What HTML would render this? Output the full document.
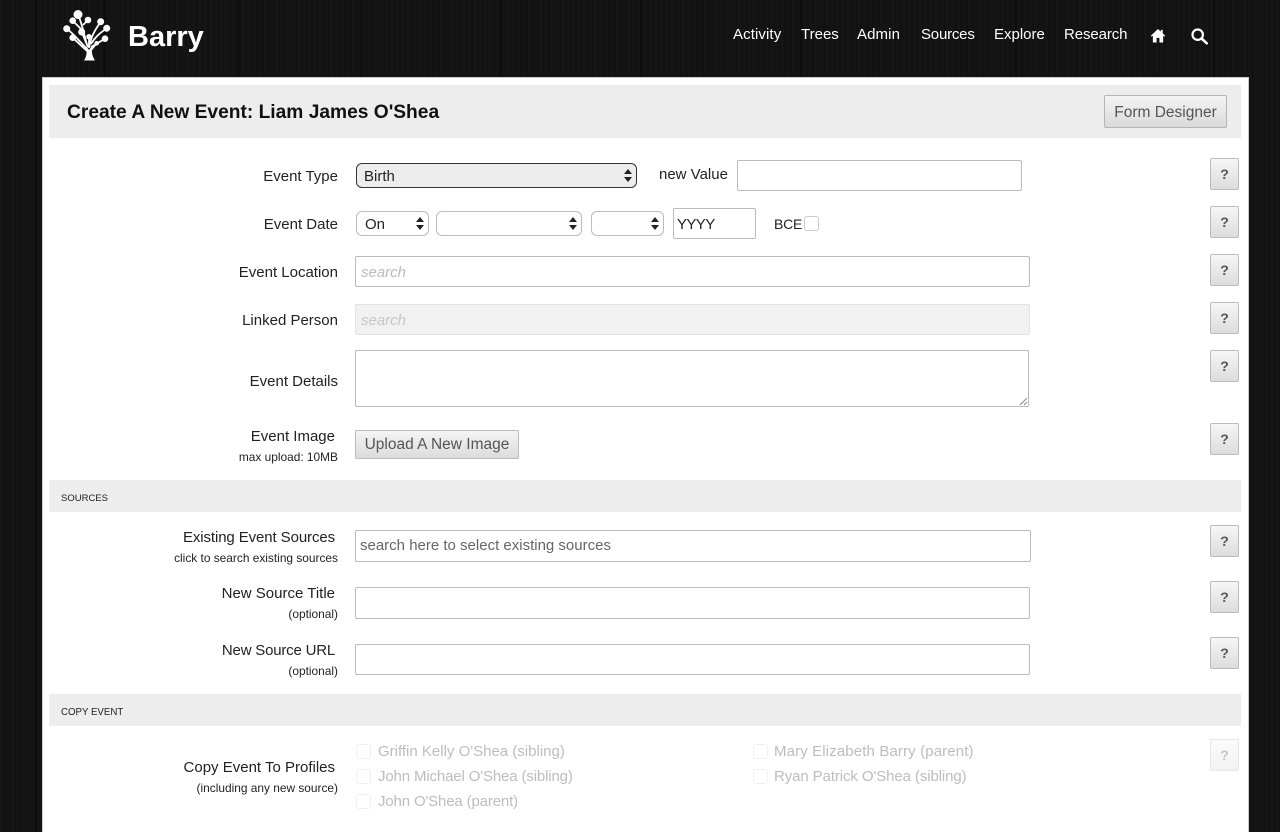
<!DOCTYPE html>
<html lang="en"><head><meta charset="utf-8"><title>Create A New Event</title>
<style>
*{box-sizing:border-box}
html,body{margin:0;padding:0;width:1280px;height:832px;overflow:hidden}
body{position:relative;font-family:"Liberation Sans",sans-serif;color:#222;font-size:15px;
background-color:#131313;
background-image:linear-gradient(90deg,transparent 0 35px,#0d0d0d 35px 37px,transparent 37px 104px,#0c0c0c 104px 106px,transparent 106px 238px,#0e0e0e 238px 240px,transparent 240px 360px,#0e0e0e 360px 362px,transparent 362px 500px,#0e0e0e 500px 502px,transparent 502px 640px,#0e0e0e 640px 642px,transparent 642px 800px,#0e0e0e 800px 802px,transparent 802px 1015px,#0c0c0c 1015px 1017px,transparent 1017px 1213px,#0c0c0c 1213px 1215px,transparent 1215px),repeating-linear-gradient(90deg,#151515 0 3px,#121212 3px 5px,#141414 5px 9px,#111 9px 11px)}
.a{position:absolute}
.t{position:absolute;white-space:nowrap;line-height:20px;margin-top:1px}
.r{text-align:right}
.nav{position:absolute;top:25px;color:#fff;font-size:15px;line-height:20px;white-space:nowrap}
#card{position:absolute;left:42px;top:77px;width:1207px;height:770px;background:#fff;border:1px solid #ccc;border-bottom:0}
.band{position:absolute;background:#ededed;left:49px;width:1192px}
.in{position:absolute;background:#fff;border:1px solid #bbb;border-radius:2px}
.sel{position:absolute;background:#fff;border:1px solid #bbb;border-radius:6px;height:25px}
.sel::after{content:"";position:absolute;right:4px;top:5px;width:0;height:0;border-left:4px solid transparent;border-right:4px solid transparent;border-bottom:5px solid #222}
.sel::before{content:"";position:absolute;right:4px;top:13px;width:0;height:0;border-left:4px solid transparent;border-right:4px solid transparent;border-top:5px solid #222}
.help{position:absolute;left:1210px;width:29px;height:32px;border:1px solid #bbb;border-radius:2px;background:linear-gradient(#f6f6f6,#dcdcdc);color:#555;font-weight:bold;font-size:14px;line-height:31px;text-align:center}
.cb{position:absolute;width:15px;height:15px;border:1px solid #f0f0f0;border-radius:3px;background:#fff}
.g{color:#bdbdbd}
.s{font-size:11.900px;line-height:14px;color:#222;margin-top:0}
</style></head><body>

<svg class="a" style="left:62px;top:10px" width="50" height="52" viewBox="0 0 50 52" fill="#fff">
<g fill="none" stroke="#fff" stroke-width="1.800">
<path d="M27 38C29 26 33 20 38.700 11.700"/><path d="M29 34C33 27 38 23 44.700 18.300"/><path d="M29 37L43 28.700"/><path d="M29 40L34.700 33.300"/>
<path d="M25 35C22 24 20 14 16 4"/><path d="M19 19L10.700 10.700"/><path d="M21 15L26 10"/><path d="M26 40C18 32 12 24 4.700 18.700"/><path d="M25 41L10.700 27.700"/><path d="M26 37L19.700 22"/><path d="M27 37L27 26.700"/>
</g>
<path d="M24 36C25 42 25 46 22 50.500H33C30 46 29.500 42 30 36L27 40Z"/>
<circle cx="16" cy="4.500" r="4.500"/><circle cx="10.700" cy="10.700" r="3.300"/><circle cx="26" cy="10" r="3.300"/><circle cx="38.700" cy="11.700" r="3.500"/><circle cx="4.700" cy="18.700" r="3.500"/><circle cx="44.700" cy="18.300" r="3.500"/><circle cx="19.700" cy="22" r="3.500"/><circle cx="10.700" cy="27.700" r="3.300"/><circle cx="27" cy="26.700" r="2.700"/><circle cx="43" cy="28.700" r="3.300"/><circle cx="34.700" cy="33.300" r="2.300"/>
</svg>
<div class="t" style="left:128px;top:18px;color:#fff;font-size:29px;font-weight:bold;line-height:36px">Barry</div>

<div class="nav" style="left:733px;letter-spacing:.1px">Activity</div>
<div class="nav" style="left:801px">Trees</div>
<div class="nav" style="left:857px;letter-spacing:.1px">Admin</div>
<div class="nav" style="left:921px;letter-spacing:-.2px">Sources</div>
<div class="nav" style="left:994px">Explore</div>
<div class="nav" style="left:1064px;letter-spacing:-.1px">Research</div>
<svg class="a" style="left:1150px;top:28px" width="16" height="15" viewBox="0 0 17 16" fill="#fff"><path d="M8.500 1L0.800 8.200L1.800 9.200L3 8.200V15.500H7V10.500H10V15.500H14V8.200L15.200 9.200L16.200 8.200L13.500 5.700V2H11.500V3.800Z"/></svg>
<svg class="a" style="left:1190px;top:27px" width="20" height="20" viewBox="0 0 20 20" fill="none" stroke="#fff"><circle cx="7.700" cy="7.700" r="5.200" stroke-width="2.200"/><path d="M11.500 11.500L16.800 16.300" stroke-width="2.600" stroke-linecap="round"/></svg>

<div id="card"></div>
<div class="band" style="top:85px;height:53px"></div>
<div class="t" style="left:67px;top:100px;font-size:19.200px;font-weight:bold;line-height:24px;color:#111">Create A New Event: Liam James O'Shea</div>
<div class="a" style="left:1104px;top:95px;width:123px;height:33px;border:1px solid #b5b5b5;border-radius:2px;background:linear-gradient(#f4f4f4,#dadada);text-align:center;font-size:15.500px;line-height:33px;color:#555;white-space:nowrap">Form Designer</div>

<div class="t r" style="right:942px;top:166px">Event Type</div>
<div class="sel" style="left:356px;top:163px;width:281px;background:#ededed;border-color:#333"></div>
<div class="t" style="left:364px;top:166px">Birth</div>
<div class="t" style="left:659px;top:164px">new Value</div>
<div class="in" style="left:737px;top:160px;width:285px;height:31px"></div>
<div class="help" style="top:158px">?</div>

<div class="t r" style="right:942px;top:214px">Event Date</div>
<div class="sel" style="left:356px;top:211px;width:73px"></div>
<div class="t" style="left:365px;top:214px">On</div>
<div class="sel" style="left:436px;top:211px;width:146px"></div>
<div class="sel" style="left:591px;top:211px;width:73px"></div>
<div class="in" style="left:673px;top:208px;width:83px;height:31px"></div>
<div class="t" style="left:677px;top:214px;letter-spacing:-.6px">YYYY</div>
<div class="t" style="left:774px;top:213px;font-size:14px;letter-spacing:-.2px">BCE</div>
<div class="cb" style="left:804px;top:216px;border-color:#ccc"></div>
<div class="help" style="top:206px">?</div>

<div class="t r" style="right:942px;top:262px">Event Location</div>
<div class="in" style="left:355px;top:256px;width:675px;height:31px"></div>
<div class="t" style="left:361px;top:262px;color:#bbb;font-style:italic">search</div>
<div class="help" style="top:254px">?</div>

<div class="t r" style="right:942px;top:310px">Linked Person</div>
<div class="in" style="left:355px;top:304px;width:675px;height:31px;background:#f1f1f1;border-color:#e2e2e2"></div>
<div class="t" style="left:361px;top:310px;color:#c6c6c6;font-style:italic">search</div>
<div class="help" style="top:302px">?</div>

<div class="t r" style="right:942px;top:371px">Event Details</div>
<div class="in" style="left:355px;top:350px;width:674px;height:57px"></div>
<svg class="a" style="left:1019px;top:397px" width="9" height="9" viewBox="0 0 9 9" stroke="#888" fill="none"><path d="M1 8L8 1M5 8L8 5"/></svg>
<div class="help" style="top:350px">?</div>

<div class="t r" style="right:945px;top:426px">Event Image</div>
<div class="t r s" style="right:942px;top:450px">max upload: 10MB</div>
<div class="a" style="left:355px;top:430px;width:164px;height:29px;border:1px solid #bbb;border-radius:2px;background:linear-gradient(#f4f4f4,#dcdcdc);text-align:center;font-size:15.500px;line-height:28px;color:#555;white-space:nowrap">Upload A New Image</div>
<div class="help" style="top:423px">?</div>

<div class="band" style="top:480px;height:32px"></div>
<div class="t" style="left:61px;top:489px;font-size:9.500px;line-height:18px">SOURCES</div>

<div class="t r" style="right:945px;top:527px;letter-spacing:-.1px">Existing Event Sources</div>
<div class="t r s" style="right:942px;top:551px">click to search existing sources</div>
<div class="in" style="left:355px;top:530px;width:676px;height:32px"></div>
<div class="t" style="left:360px;top:535px;color:#666">search here to select existing sources</div>
<div class="help" style="top:525px">?</div>

<div class="t r" style="right:945px;top:583px">New Source Title</div>
<div class="t r s" style="right:942px;top:607px">(optional)</div>
<div class="in" style="left:355px;top:587px;width:675px;height:32px"></div>
<div class="help" style="top:581px">?</div>

<div class="t r" style="right:945px;top:640px;letter-spacing:-.2px">New Source URL</div>
<div class="t r s" style="right:942px;top:664px">(optional)</div>
<div class="in" style="left:355px;top:644px;width:675px;height:31px"></div>
<div class="help" style="top:637px">?</div>

<div class="band" style="top:694px;height:32px"></div>
<div class="t" style="left:61px;top:703px;font-size:9.700px;line-height:18px">COPY EVENT</div>

<div class="t r" style="right:945px;top:757px">Copy Event To Profiles</div>
<div class="t r s" style="right:942px;top:781px">(including any new source)</div>

<div class="cb" style="left:356px;top:744px"></div><div class="t g" style="left:378px;top:741px">Griffin Kelly O'Shea (sibling)</div>
<div class="cb" style="left:356px;top:769px"></div><div class="t g" style="left:378px;top:766px;letter-spacing:-.14px">John Michael O'Shea (sibling)</div>
<div class="cb" style="left:356px;top:794px"></div><div class="t g" style="left:378px;top:791px;letter-spacing:-.15px">John O'Shea (parent)</div>
<div class="cb" style="left:753px;top:744px"></div><div class="t g" style="left:774px;top:741px;letter-spacing:.13px">Mary Elizabeth Barry (parent)</div>
<div class="cb" style="left:753px;top:769px"></div><div class="t g" style="left:774px;top:766px;letter-spacing:-.1px">Ryan Patrick O'Shea (sibling)</div>
<div class="help" style="top:739px;opacity:.35">?</div>
</body></html>
